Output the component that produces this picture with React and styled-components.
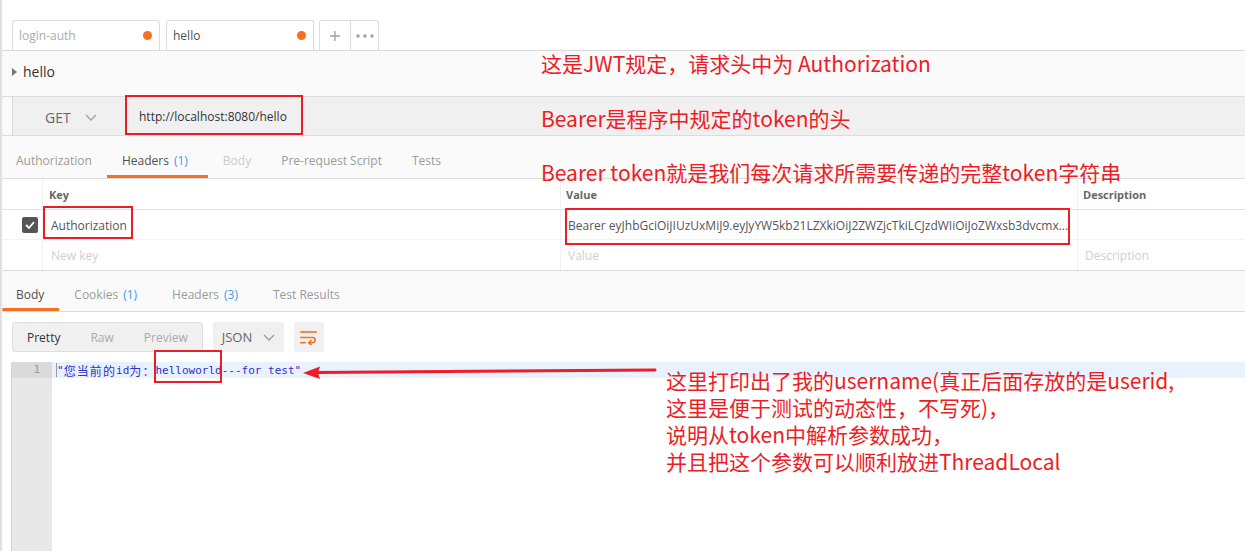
import React from 'react';
import styled, { createGlobalStyle } from 'styled-components';

const Global = createGlobalStyle`
  html, body { margin: 0; padding: 0; background: #fff; }
  body { font-family: "Open Sans", "Noto Sans", sans-serif; }
  * { box-sizing: border-box; }
`;

const ORANGE = '#f47023';
const RED = '#ee1c25';

const Page = styled.div`
  position: relative;
  width: 1245px;
  height: 551px;
  overflow: hidden;
  background: #fff;
  display: flex;
  flex-direction: column;
  &::before {
    content: '';
    position: absolute;
    left: 0; top: 0; bottom: 0;
    width: 3px;
    background: linear-gradient(to right, #d6d6d6, #ececec 60%, rgba(255,255,255,0));
    z-index: 5;
  }
`;

/* ---------- top tab strip ---------- */
const TabBar = styled.div`
  flex: none;
  height: 51px;
  display: flex;
  align-items: flex-end;
  gap: 6px;
  padding-left: 12px;
  border-bottom: 1px solid #d9d9d9;
`;

const Tab = styled.div`
  width: 148px;
  height: 30px;
  border: 1px solid #dddddd;
  border-bottom: none;
  border-radius: 3px 3px 0 0;
  background: #fff;
  display: flex;
  align-items: center;
  justify-content: space-between;
  padding: 0 7px 0 6px;
  font-size: 12px;
  color: ${p => (p.$active ? '#505050' : '#ababab')};
`;

const Dot = styled.span`
  width: 9px;
  height: 9px;
  border-radius: 50%;
  background: ${ORANGE};
`;

const TabTools = styled.div`
  display: flex;
  height: 30px;
  margin-left: -1px;
  border: 1px solid #dddddd;
  border-bottom: none;
  border-radius: 3px 3px 0 0;
`;

const ToolBtn = styled.div`
  width: ${p => p.$w}px;
  display: flex;
  align-items: center;
  justify-content: center;
  color: #9a9a9a;
  & + & { border-left: 1px solid #dddddd; }
`;

/* ---------- name row ---------- */
const NameRow = styled.div`
  flex: none;
  height: 46px;
  background: #fafafa;
  border-bottom: 1px solid #dcdcdc;
  display: flex;
  align-items: center;
  gap: 6px;
  padding: 0 0 4px 12px;
  font-size: 14px;
  color: #333;
`;

const Caret = styled.span`
  width: 0; height: 0;
  border-top: 4px solid transparent;
  border-bottom: 4px solid transparent;
  border-left: 5px solid #777;
`;

/* ---------- url row ---------- */
const UrlRow = styled.div`
  flex: none;
  height: 39px;
  display: flex;
  background: #fafafa;
  padding-left: 12px;
  border-bottom: 1px solid #dcdcdc;
`;

const UrlBar = styled.div`
  flex: 1;
  display: flex;
  background: #f0f0f0;
  border-left: 1px solid #dcdcdc;
`;

const Method = styled.div`
  width: 113px;
  display: flex;
  align-items: center;
  gap: 14px;
  padding: 2px 0 0 32px;
  border-right: 1px solid #dcdcdc;
  font-size: 14px;
  color: #666;
`;

const UrlText = styled.div`
  display: flex;
  align-items: center;
  padding: 1px 0 0 13px;
  font-size: 12px;
  color: #333;
`;

/* ---------- tabs (request / response) ---------- */
const TabsRow = styled.div`
  flex: none;
  height: ${p => p.$h}px;
  display: flex;
  background: #fafafa;
  border-bottom: 1px solid #dcdcdc;
  padding-left: 1px;
`;

const SubTab = styled.div`
  height: 100%;
  display: flex;
  align-items: center;
  padding: ${p => p.$pt}px 15px 0;
  border-bottom: 3px solid ${p => (p.$active ? ORANGE : 'transparent')};
  font-size: 12px;
  white-space: nowrap;
  color: ${p => (p.$active ? '#505050' : p.$disabled ? '#cccccc' : '#9a9a9a')};
`;

const Count = styled.span`
  color: #3d9be9;
  margin-left: 5px;
  padding-right: 5px;
`;

/* ---------- headers table ---------- */
const GridRow = styled.div`
  flex: none;
  display: grid;
  grid-template-columns: 42px 518px 517px 1fr;
  height: ${p => p.$h}px;
  border-bottom: 1px solid ${p => p.$line};
  background: #fff;
`;

const Cell = styled.div`
  display: flex;
  align-items: center;
  padding-left: ${p => p.$pad}px;
  padding-top: ${p => p.$pt || 0}px;
  border-left: ${p => (p.$first ? 'none' : '1px solid #f1f1f1')};
  overflow: hidden;
  white-space: nowrap;
  font-size: ${p => (p.$head ? 11 : 12)}px;
  font-weight: ${p => (p.$head ? 700 : 400)};
  color: ${p => (p.$head ? '#666' : p.$ph ? '#cfcfcf' : '#555')};
`;

const ValueText = styled.span`
  font-size: 12px;
  color: #555;
  overflow: hidden;
`;

const Check = styled.span`
  width: 16px;
  height: 16px;
  border-radius: 2px;
  background: #555;
  display: flex;
  align-items: center;
  justify-content: center;
`;

/* ---------- response toolbar ---------- */
const Toolbar = styled.div`
  flex: none;
  height: 50px;
  display: flex;
  gap: 10px;
  padding: 10px 12px;
`;

const Segmented = styled.div`
  display: flex;
  background: #f0f0f0;
  border: 1px solid #dedede;
  border-radius: 3px;
`;

const Seg = styled.div`
  display: flex;
  align-items: center;
  padding: 0 ${p => p.$pr}px 0 ${p => p.$pl}px;
  font-size: 12px;
  color: ${p => (p.$active ? '#333' : '#aaa')};
`;

const Select = styled.div`
  width: 71px;
  display: flex;
  align-items: center;
  gap: 11px;
  padding-left: 9px;
  background: #f0f0f0;
  border-radius: 3px;
  font-size: 13px;
  color: #666;
`;

const WrapBtn = styled.div`
  width: 30px;
  display: flex;
  align-items: center;
  justify-content: center;
  background: #f0f0f0;
  border-radius: 3px;
`;

/* ---------- code editor ---------- */
const Editor = styled.div`
  flex: 1;
  display: flex;
  padding-left: 11px;
`;

const Gutter = styled.div`
  width: 41px;
  background: #e8e8e8;
  border-left: 1px solid #d6d6d6;
`;

const LineNo = styled.div`
  height: 16px;
  line-height: 16px;
  text-align: right;
  padding-right: 12px;
  background: #dadada;
  font-family: "DejaVu Sans Mono", "Liberation Mono", monospace;
  font-size: 11px;
  color: #999;
`;

const Code = styled.div`
  flex: 1;
`;

const CodeLine = styled.div`
  height: 16px;
  display: flex;
  align-items: center;
  padding-left: 4px;
  background: #e8f2ff;
  white-space: pre;
  font-family: "DejaVu Sans Mono", "Liberation Mono", monospace;
  font-size: 11px;
  color: #3030cc;
`;

const Cursor = styled.span`
  width: 1px;
  height: 14px;
  background: #9a9a9a;
`;

const Cjk = styled.span`
  font-family: "Noto Sans CJK SC", sans-serif;
  font-size: 12px;
  letter-spacing: 1.1px;
`;

/* ---------- annotation overlay ---------- */
const Note = styled.div`
  position: absolute;
  left: ${p => p.$x}px;
  top: ${p => p.$y}px;
  z-index: 10;
  font-family: "Noto Sans CJK SC", "Noto Sans", sans-serif;
  font-size: 21px;
  line-height: 24px;
  color: ${RED};
  white-space: nowrap;
`;

const NoteBlock = styled.div`
  position: absolute;
  left: 666px;
  top: 368px;
  z-index: 10;
  display: flex;
  flex-direction: column;
  gap: 3px;
  font-family: "Noto Sans CJK SC", "Noto Sans", sans-serif;
  font-size: 21px;
  line-height: 24px;
  color: ${RED};
  white-space: nowrap;
`;

const RedBox = styled.div`
  position: absolute;
  left: ${p => p.$x}px;
  top: ${p => p.$y}px;
  width: ${p => p.$w}px;
  height: ${p => p.$h}px;
  border: 2px solid ${RED};
  z-index: 10;
`;

const Arrow = styled.svg`
  position: absolute;
  left: 298px;
  top: 362px;
  z-index: 10;
`;

const Chevron = ({ c = '#a0a0a0' }) => (
  <svg width="12" height="7" viewBox="0 0 12 7">
    <polyline points="1,1 6,6 11,1" fill="none" stroke={c} strokeWidth="1.3" />
  </svg>
);

export default function App() {
  return (
    <Page>
      <Global />
      <TabBar>
        <Tab>login-auth<Dot /></Tab>
        <Tab $active>hello<Dot /></Tab>
        <TabTools>
          <ToolBtn $w={30}>
            <svg width="10" height="10" viewBox="0 0 10 10">
              <path d="M5 0v10M0 5h10" stroke="#a0a0a0" strokeWidth="1.3" />
            </svg>
          </ToolBtn>
          <ToolBtn $w={28}>
            <svg width="18" height="4" viewBox="0 0 18 4">
              <circle cx="2" cy="2" r="1.7" fill="#a0a0a0" />
              <circle cx="9" cy="2" r="1.7" fill="#a0a0a0" />
              <circle cx="16" cy="2" r="1.7" fill="#a0a0a0" />
            </svg>
          </ToolBtn>
        </TabTools>
      </TabBar>

      <NameRow><Caret />hello</NameRow>

      <UrlRow>
        <UrlBar>
          <Method>GET<Chevron /></Method>
          <UrlText>http://localhost:8080/hello</UrlText>
        </UrlBar>
      </UrlRow>

      <TabsRow $h={43}>
        <SubTab $pt={10}>Authorization</SubTab>
        <SubTab $pt={10} $active>Headers<Count>(1)</Count></SubTab>
        <SubTab $pt={10} $disabled>Body</SubTab>
        <SubTab $pt={10}>Pre-request Script</SubTab>
        <SubTab $pt={10}>Tests</SubTab>
      </TabsRow>

      <GridRow $h={31} $line="#e2e2e2">
        <Cell $first />
        <Cell $head $pad={6}>Key</Cell>
        <Cell $head $pad={5}>Value</Cell>
        <Cell $head $pad={5}>Description</Cell>
      </GridRow>
      <GridRow $h={30} $line="#f2f2f2">
        <Cell $first $pad={22}>
          <Check>
            <svg width="10" height="8" viewBox="0 0 10 8">
              <polyline points="1,4 4,7 9,1" fill="none" stroke="#fff" strokeWidth="1.8" />
            </svg>
          </Check>
        </Cell>
        <Cell $pad={8} $pt={2}>Authorization</Cell>
        <Cell $pad={7} $pt={2}>
          <ValueText>Bearer eyJhbGciOiJIUzUxMiJ9.eyJyYW5kb21LZXkiOiJ2ZWZjcTkiLCJzdWIiOiJoZWxsb3dvcmx...</ValueText>
        </Cell>
        <Cell $pad={7} />
      </GridRow>
      <GridRow $h={31} $line="#dcdcdc">
        <Cell $first />
        <Cell $pad={8} $pt={1} $ph>New key</Cell>
        <Cell $pad={7} $pt={1} $ph>Value</Cell>
        <Cell $pad={7} $pt={1} $ph>Description</Cell>
      </GridRow>

      <TabsRow $h={41}>
        <SubTab $pt={9} $active>Body</SubTab>
        <SubTab $pt={9}>Cookies<Count>(1)</Count></SubTab>
        <SubTab $pt={9}>Headers<Count>(3)</Count></SubTab>
        <SubTab $pt={9}>Test Results</SubTab>
      </TabsRow>

      <Toolbar>
        <Segmented>
          <Seg $active $pl={14} $pr={15}>Pretty</Seg>
          <Seg $pl={15} $pr={15}>Raw</Seg>
          <Seg $pl={15} $pr={14}>Preview</Seg>
        </Segmented>
        <Select>JSON<Chevron c="#999" /></Select>
        <WrapBtn>
          <svg width="17" height="15" viewBox="0 0 17 15">
            <g fill="none" stroke={ORANGE} strokeWidth="1.6" strokeLinecap="square">
              <path d="M1 2h15" />
              <path d="M1 7.5h11.5a2.6 2.6 0 0 1 0 5.2H9" />
              <path d="M11 10.6l-2.2 2.1 2.2 2.1" />
              <path d="M1 12.7h4" />
            </g>
          </svg>
        </WrapBtn>
      </Toolbar>

      <Editor>
        <Gutter><LineNo>1</LineNo></Gutter>
        <Code>
          <CodeLine>
            <Cursor />"<Cjk>您当前的</Cjk>id<Cjk>为：</Cjk>helloworld---for test"
          </CodeLine>
        </Code>
      </Editor>

      <Note $x={541} $y={51}>这是JWT规定，请求头中为 Authorization</Note>
      <Note $x={541} $y={106}>Bearer是程序中规定的token的头</Note>
      <Note $x={541} $y={160}>Bearer token就是我们每次请求所需要传递的完整token字符串</Note>
      <NoteBlock>
        <span>这里打印出了我的username(真正后面存放的是userid,</span>
        <span>这里是便于测试的动态性，不写死)，</span>
        <span>说明从token中解析参数成功，</span>
        <span>并且把这个参数可以顺利放进ThreadLocal</span>
      </NoteBlock>

      <RedBox $x={125} $y={95} $w={178} $h={40} />
      <RedBox $x={43} $y={206} $w={90} $h={33} />
      <RedBox $x={565} $y={208} $w={505} $h={37} />
      <RedBox $x={154} $y={350} $w={68} $h={33} />

      <Arrow width="362" height="20" viewBox="0 0 362 20">
        <line x1="18" y1="10.5" x2="357" y2="8" stroke={RED} strokeWidth="3" strokeLinecap="round" />
        <polygon points="5,11 22,4.5 20,11 22,17" fill={RED} />
      </Arrow>
    </Page>
  );
}
